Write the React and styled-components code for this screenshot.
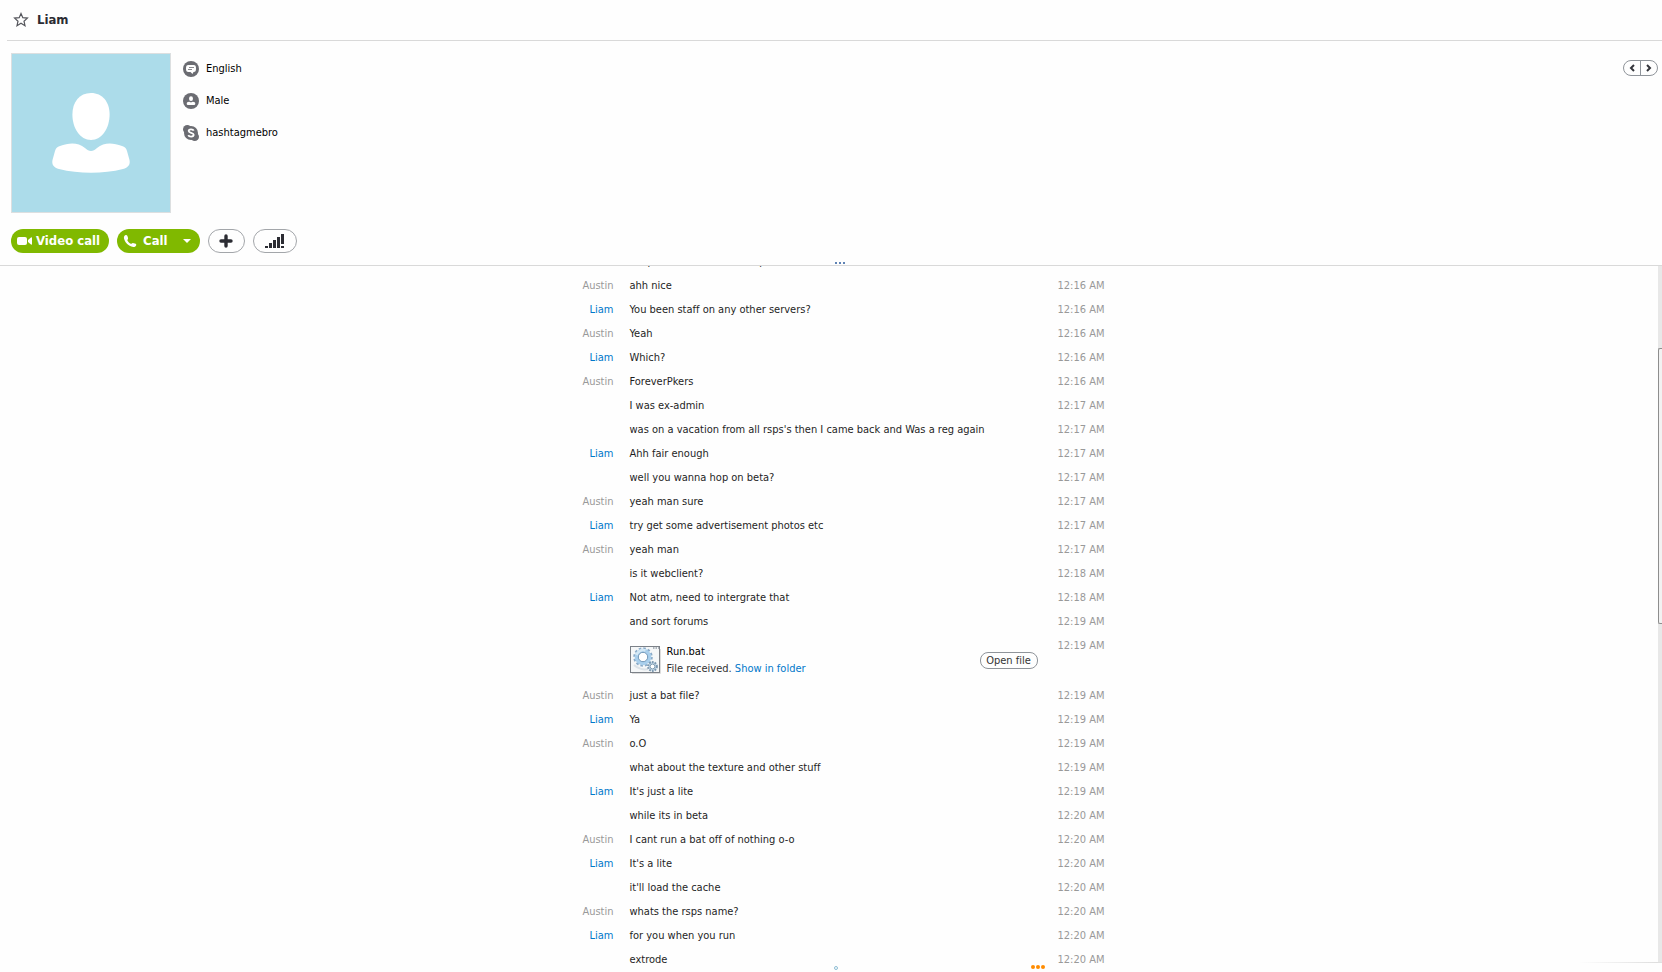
import React from 'react'
import styled, { createGlobalStyle, css } from 'styled-components'

const GlobalStyle = createGlobalStyle`
  * {
    box-sizing: border-box;
  }
  body {
    margin: 0;
    background: #fefefe;
    color: #1e1e1e;
    font-family: "DejaVu Sans Condensed", "Noto Sans", sans-serif;
    font-size: 11px;
    font-variant-ligatures: none;
    line-height: 16px;
  }
  button {
    font: inherit;
    color: inherit;
    padding: 0;
    cursor: pointer;
  }
  svg {
    display: block;
    flex: none;
  }
`

const Page = styled.div`
  display: flex;
  flex-direction: column;
  height: 100vh;
  overflow: hidden;
`

const TitleBar = styled.header`
  display: flex;
  align-items: center;
  gap: 8px;
  height: 41px;
  margin-left: 7px;
  padding-left: 6px;
  border-bottom: 1px solid #d9d9d9;
`

const StarButton = styled.button`
  border: 0;
  background: none;
`

const Title = styled.h1`
  margin: 0;
  color: #2b2c33;
  font-size: 13px;
  font-weight: bold;
`

const Profile = styled.section`
  display: flex;
  align-items: flex-start;
  padding: 12px 4px 16px 11px;
`

const Avatar = styled.div`
  width: 160px;
  height: 160px;
  border: 1px solid #dcdfe0;
  background: #acdcea;
`

const Details = styled.ul`
  flex: 1;
  margin: 0;
  padding: 0 0 0 12px;
  list-style: none;
`

const Detail = styled.li`
  display: flex;
  align-items: center;
  gap: 7px;
  height: 32px;
  color: #000;
`

const Pager = styled.div`
  display: flex;
  width: 35px;
  height: 16px;
  margin-top: 7px;
  border: 1px solid #8f949a;
  border-radius: 8px;
`

const PagerButton = styled.button`
  display: flex;
  flex: 1;
  align-items: center;
  justify-content: center;
  border: 0;
  background: none;

  & + & {
    border-left: 1px solid #8f949a;
  }
`

const Actions = styled.div`
  display: flex;
  gap: 8px;
  padding: 0 11px 12px;
`

const pill = css`
  display: flex;
  align-items: center;
  height: 24px;
  border-radius: 12px;
`

const CallButton = styled.button`
  ${pill}
  gap: 4px;
  padding: 0 9px 0 6px;
  border: 0;
  background: #80b900;
  color: #fff;
  font-size: 13px;
  font-weight: bold;
`

const CallLabel = styled.span`
  padding: 0 11px 0 2px;
`

const RoundButton = styled.button`
  ${pill}
  justify-content: center;
  width: ${p => p.$width}px;
  border: 1px solid #a3a6aa;
  background: #fefefe;
`

const Chat = styled.main`
  position: relative;
  display: flex;
  flex: 1;
  min-height: 0;
  border-top: 1px solid #d9d9d9;
`

const Grip = styled.div`
  position: absolute;
  top: -4px;
  left: 50%;
  display: flex;
  gap: 2px;
  margin-left: 4px;

  i {
    width: 2px;
    height: 2px;
    background: #5f83b5;
  }
`

/* newest message stays at the bottom, older ones are cut off at the top */
const Log = styled.div`
  display: flex;
  flex: 1;
  flex-direction: column;
  align-items: center;
  justify-content: flex-end;
  overflow: hidden;
`

const Row = styled.div`
  display: grid;
  flex: none;
  grid-template-columns: 60px 408px 47px;
  column-gap: 16px;
  width: 551px;
  min-height: ${p => (p.$tall ? 50 : 24)}px;
  padding: 4px 0;
`

const Author = styled.span`
  color: ${p => (p.$me ? '#999' : '#0078ca')};
  text-align: right;
`

const Message = styled.span`
  color: #1e1e1e;
  white-space: nowrap;
`

const Time = styled.time`
  margin-left: 4px;
  color: #999;
  white-space: nowrap;
`

const FileCard = styled.div`
  display: flex;
  align-items: center;
  gap: 6px;
  height: 42px;
  padding-top: 2px;
`

const FileInfo = styled.div`
  flex: 1;
  color: #333;
  line-height: 17px;
`

const FileName = styled.div`
  color: #000;
`

const FolderLink = styled.a`
  color: #0078ca;
  text-decoration: none;
`

const OpenButton = styled.button`
  width: 58px;
  height: 17px;
  border: 1px solid #8f949a;
  border-radius: 8px;
  background: #fefefe;
  color: #333;
  line-height: 15px;
`

const Scrollbar = styled.div`
  display: flex;
  flex-direction: column;
  width: 4px;
  margin-bottom: 9px;
  border-bottom: 1px solid #e0e0e0;
  background: #e8e8e8;
`

const Track = styled.div`
  flex: ${p => p.$size};
`

const Thumb = styled.div`
  flex: ${p => p.$size};
  border: 1px solid #8e8e8e;
  border-right: 0;
  border-radius: 2px 0 0 2px;
  background: #f2f2f2;
`

const BottomEdge = styled.div`
  position: absolute;
  right: 4px;
  bottom: 9px;
  width: 80px;
  height: 1px;
  background: linear-gradient(to right, #fefefe, #dedede);
`

const Ring = styled.div`
  position: absolute;
  bottom: 2px;
  left: 50%;
  width: 4px;
  height: 4px;
  margin-left: 3px;
  border: 1px solid #8dbdd4;
  border-radius: 50%;
`

const More = styled.button`
  position: absolute;
  bottom: 3px;
  left: 50%;
  display: flex;
  gap: 1px;
  margin-left: 200px;
  border: 0;
  background: none;

  i {
    width: 4px;
    height: 4px;
    border-radius: 50%;
    background: #ff8c00;
  }
`

const messages = [
  { text: 'Ive ported a few servers up' },
  { from: 'Austin', text: 'ahh nice', time: '12:16 AM' },
  { from: 'Liam', text: 'You been staff on any other servers?', time: '12:16 AM' },
  { from: 'Austin', text: 'Yeah', time: '12:16 AM' },
  { from: 'Liam', text: 'Which?', time: '12:16 AM' },
  { from: 'Austin', text: 'ForeverPkers', time: '12:16 AM' },
  { text: 'I was ex-admin', time: '12:17 AM' },
  { text: "was on a vacation from all rsps's then I came back and Was a reg again", time: '12:17 AM' },
  { from: 'Liam', text: 'Ahh fair enough', time: '12:17 AM' },
  { text: 'well you wanna hop on beta?', time: '12:17 AM' },
  { from: 'Austin', text: 'yeah man sure', time: '12:17 AM' },
  { from: 'Liam', text: 'try get some advertisement photos etc', time: '12:17 AM' },
  { from: 'Austin', text: 'yeah man', time: '12:17 AM' },
  { text: 'is it webclient?', time: '12:18 AM' },
  { from: 'Liam', text: 'Not atm, need to intergrate that', time: '12:18 AM' },
  { text: 'and sort forums', time: '12:19 AM' },
  { file: 'Run.bat', time: '12:19 AM' },
  { from: 'Austin', text: 'just a bat file?', time: '12:19 AM' },
  { from: 'Liam', text: 'Ya', time: '12:19 AM' },
  { from: 'Austin', text: 'o.O', time: '12:19 AM' },
  { text: 'what about the texture and other stuff', time: '12:19 AM' },
  { from: 'Liam', text: "It's just a lite", time: '12:19 AM' },
  { text: 'while its in beta', time: '12:20 AM' },
  { from: 'Austin', text: 'I cant run a bat off of nothing o-o', time: '12:20 AM' },
  { from: 'Liam', text: "It's a lite", time: '12:20 AM' },
  { text: "it'll load the cache", time: '12:20 AM' },
  { from: 'Austin', text: 'whats the rsps name?', time: '12:20 AM' },
  { from: 'Liam', text: 'for you when you run', time: '12:20 AM' },
  { text: 'extrode', time: '12:20 AM' }
]

const StarIcon = () => (
  <svg width="16" height="16" viewBox="0 0 16 16" fill="none" stroke="#55565c" strokeWidth="1.2">
    <path d="M8 1.6l1.8 4.1 4.6.4-3.4 3.1 1 4.5L8 11.3l-4 2.4 1-4.5L1.6 6.1l4.6-.4z" />
  </svg>
)

const PersonPicture = () => (
  <svg width="158" height="158" viewBox="1 1 158 158" fill="#fff">
    <path d="M80 40C91.500 40 98.600 49 98.600 61.500C98.600 75 91 87 80 87C69 87 61.400 75 61.400 61.500C61.400 49 68.500 40 80 40Z" />
    <path d="M44 98C45 95 46 94 49 93C58 89.500 67 89 74 95C78 99 82 99 86 95C93 89 102 89.500 111 93C114 94 115 95 116 98L118.500 107C119.500 112 117 114.500 112 116C92 121 68 121 48 116C43 114.500 40.500 112 41.500 107Z" />
  </svg>
)

const LanguageIcon = () => (
  <svg width="16" height="16" viewBox="0 0 16 16">
    <circle cx="8" cy="8" r="8" fill="#6b6c72" />
    <path d="M5.500 4h5C12.500 4 13 5 13 7.500S12.500 11 10.500 11L9.500 13 7.500 11h-2C3.500 11 3 10 3 7.500S3.500 4 5.500 4z" fill="#fff" />
    <path d="M6 6.500h5M5 8.500h4" stroke="#6b6c72" strokeWidth=".8" />
  </svg>
)

const GenderIcon = () => (
  <svg width="16" height="16" viewBox="0 0 16 16">
    <circle cx="8" cy="8" r="8" fill="#6b6c72" />
    <ellipse cx="8" cy="5.700" rx="2" ry="2.400" fill="#fff" />
    <path d="M4 9.500c1.300-1 2.800-1 4 0 1.200-1 2.700-1 4 0 .6 1.500.2 2.500-.8 2.500H4.800C3.800 12 3.400 11 4 9.500z" fill="#fff" />
  </svg>
)

const SkypeIcon = () => (
  <svg width="16" height="16" viewBox="0 0 16 16">
    <g fill="#6b6c72">
      <circle cx="8" cy="8" r="7" />
      <circle cx="4.300" cy="4.300" r="4.300" />
      <circle cx="11.700" cy="11.700" r="4.300" />
    </g>
    <path d="M10.700 5.700C10 4 5.700 3.900 5.700 6.100c0 2.200 5 1.300 5 3.700 0 2.300-4.700 2.200-5.400.3" fill="none" stroke="#fff" strokeWidth="1.800" />
  </svg>
)

const VideoIcon = () => (
  <svg width="15" height="10" viewBox="0 0 15 10" fill="#fff">
    <rect y="1" width="10" height="8" rx="2" />
    <path d="M11 4l3-2.500q1-.5 1 .5v6q0 1-1 .5L11 6z" />
  </svg>
)

const PhoneIcon = () => (
  <svg width="14" height="14" viewBox="0 0 14 14" fill="#fff">
    <path d="M2.200 1.200C3.500.5 4.300 1 4.800 3l.3 1.500c.1.600-1 1.200-.7 1.900.8 1.600 2 2.700 3.400 3.400.8.300 1.300-.9 2-.8l2 .4c1.500.4 1.800 1.100 1.200 2.300C12 13.500 9 13.300 6.200 11.600 3.200 9.700 1.500 7 1 4.600c-.3-1.800.2-2.800 1.200-3.400z" />
  </svg>
)

const CaretIcon = () => (
  <svg width="8" height="4" viewBox="0 0 8 4" fill="#fff">
    <path d="M0 0h8L4 4z" />
  </svg>
)

const PlusIcon = () => (
  <svg width="14" height="14" viewBox="0 0 14 14" stroke="#2b2c33" strokeWidth="3.400" strokeLinecap="round">
    <path d="M7 2v10M2 7h10" />
  </svg>
)

const SignalIcon = () => (
  <svg width="19" height="14" viewBox="0 0 19 14" fill="#2b2c33">
    <path d="M0 12h3v2H0zM4 9h3v5H4zM8 6h3v8H8zM12 3h3v11h-3zM16 0h3v10h-3zM16 12h3v2h-3z" />
  </svg>
)

const Chevron = ({ d }) => (
  <svg width="6" height="8" viewBox="0 0 6 8" fill="none" stroke="#33343a" strokeWidth="2">
    <path d={d} />
  </svg>
)

const BatIcon = () => (
  <svg width="31" height="28" viewBox="0 0 31 28" fill="none">
    <path d="M2 27.500h28.500V3" stroke="#dcdcdc" />
    <rect x=".5" y=".5" width="29" height="26" fill="#f5f7f8" stroke="#7c8188" />
    <path d="M23 2h1.500M25.500 2H27M28 2h1" stroke="#66717c" />
    <circle cx="13" cy="11" r="8.500" stroke="#8aabc8" strokeWidth="2.500" strokeDasharray="2.500 1.950" />
    <circle cx="13" cy="11" r="6.300" stroke="#a9cfec" strokeWidth="4" />
    <path d="M6.500 9a7 7 0 0 1 9-4.500" stroke="#d4e8f5" strokeWidth="2.500" />
    <circle cx="13" cy="11" r="4.700" fill="#fff" stroke="#7197b8" />
    <path d="M4 19c4 4 10 5 14 4" stroke="#dbe2e7" strokeWidth="2" />
    <circle cx="22.500" cy="20.500" r="4.400" fill="#c0d5e5" stroke="#7c98b0" strokeWidth="2" strokeDasharray="1.700 1.100" />
    <circle cx="22.500" cy="20.500" r="2.400" fill="#fff" stroke="#829db2" />
  </svg>
)

function FileMessage({ name }) {
  return (
    <FileCard>
      <BatIcon />
      <FileInfo>
        <FileName>{name}</FileName>
        File received. <FolderLink href="#folder">Show in folder</FolderLink>
      </FileInfo>
      <OpenButton type="button">Open file</OpenButton>
    </FileCard>
  )
}

function App() {
  return (
    <Page>
      <GlobalStyle />
      <TitleBar>
        <StarButton type="button" aria-label="Favorite"><StarIcon /></StarButton>
        <Title>Liam</Title>
      </TitleBar>
      <Profile>
        <Avatar><PersonPicture /></Avatar>
        <Details>
          <Detail><LanguageIcon />English</Detail>
          <Detail><GenderIcon />Male</Detail>
          <Detail><SkypeIcon />hashtagmebro</Detail>
        </Details>
        <Pager>
          <PagerButton type="button" aria-label="Previous"><Chevron d="M5 1L2 4l3 3" /></PagerButton>
          <PagerButton type="button" aria-label="Next"><Chevron d="M1 1l3 3-3 3" /></PagerButton>
        </Pager>
      </Profile>
      <Actions>
        <CallButton type="button"><VideoIcon />Video call</CallButton>
        <CallButton type="button">
          <PhoneIcon /><CallLabel>Call</CallLabel><CaretIcon />
        </CallButton>
        <RoundButton type="button" $width={37} aria-label="Add people"><PlusIcon /></RoundButton>
        <RoundButton type="button" $width={44} aria-label="Call quality"><SignalIcon /></RoundButton>
      </Actions>
      <Chat>
        <Log>
          {messages.map((m, i) => (
            <Row key={i} $tall={!!m.file}>
              <Author $me={m.from === 'Austin'}>{m.from}</Author>
              {m.file ? <FileMessage name={m.file} /> : <Message>{m.text}</Message>}
              {m.time && <Time>{m.time}</Time>}
            </Row>
          ))}
        </Log>
        <Scrollbar>
          <Track $size={82} />
          <Thumb $size={276} />
          <Track $size={339} />
        </Scrollbar>
        <Grip><i /><i /><i /></Grip>
        <BottomEdge />
        <Ring />
        <More type="button" aria-label="More"><i /><i /><i /></More>
      </Chat>
    </Page>
  )
}

export default App
